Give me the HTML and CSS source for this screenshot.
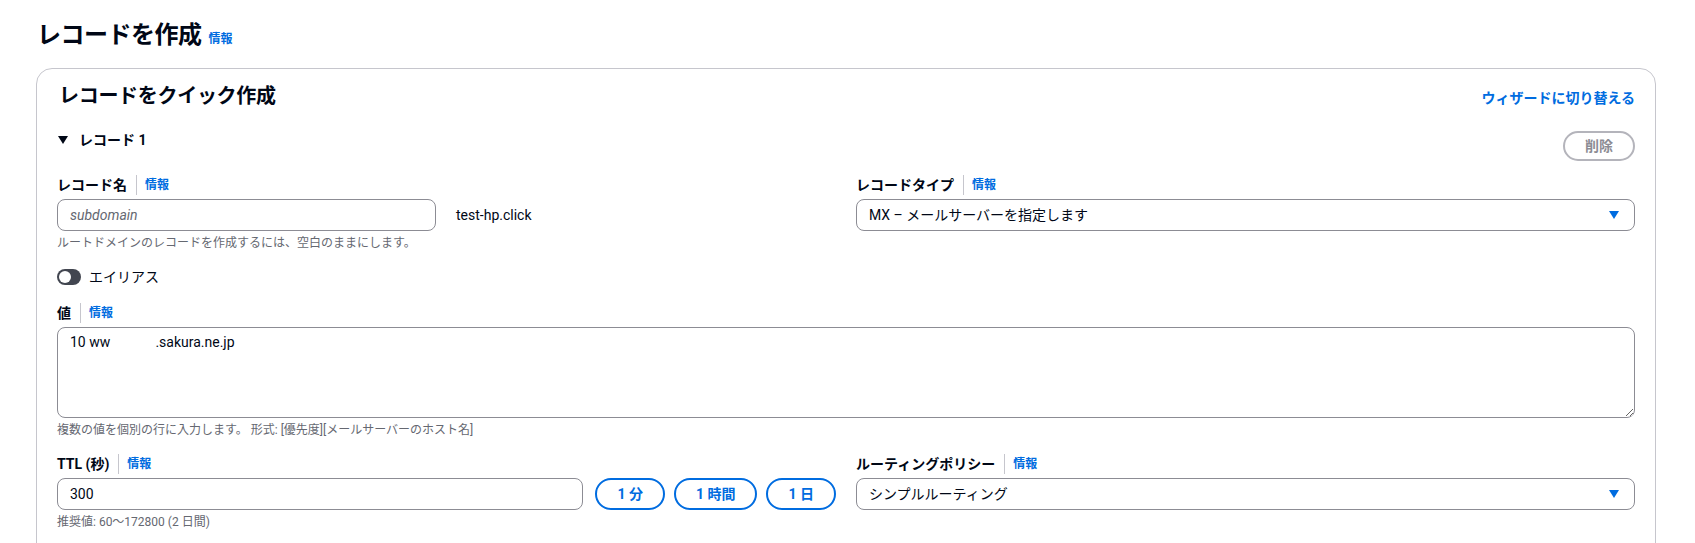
FILE: index.html
```html
<!DOCTYPE html>
<html lang="ja">
<head>
<meta charset="utf-8">
<title>レコードを作成</title>
<link rel="stylesheet" href="styles.css">
</head>
<body>
<div class="page">
  <div class="page-header">
    <h1 class="page-title">レコードを作成</h1>
    <a class="info-link title-info">情報</a>
  </div>

  <div class="container">
    <div class="container-header">
      <h2 class="container-title">レコードをクイック作成</h2>
      <a class="wizard-link">ウィザードに切り替える</a>
    </div>

    <div class="record-header">
      <div class="record-toggle">
        <svg class="caret" width="10" height="8" viewBox="0 0 10 8"><path d="M0 0 H10 L5 8 Z" fill="#000716"/></svg>
        <span>レコード 1</span>
      </div>
      <button class="btn-delete" disabled>削除</button>
    </div>

    <div class="grid2">
      <div class="field">
        <div class="label-row"><span class="label">レコード名</span><a class="info-link">情報</a></div>
        <div class="name-row">
          <input class="text-input name-input" type="text" placeholder="subdomain">
          <span class="domain-suffix">test-hp.click</span>
        </div>
        <div class="hint">ルートドメインのレコードを作成するには、空白のままにします。</div>
      </div>
      <div class="field">
        <div class="label-row"><span class="label">レコードタイプ</span><a class="info-link">情報</a></div>
        <div class="select">
          <span>MX – メールサーバーを指定します</span>
          <svg class="select-caret" width="12" height="10" viewBox="0 0 12 10"><path d="M1 1 H11 L6 9 Z" fill="#006ce0"/></svg>
        </div>
      </div>
    </div>

    <div class="alias-row">
      <span class="toggle"></span>
      <span class="alias-text">エイリアス</span>
    </div>

    <div class="field value-field">
      <div class="label-row"><span class="label">値</span><a class="info-link">情報</a></div>
      <textarea class="textarea">10 ww             .sakura.ne.jp</textarea>
      <div class="hint">複数の値を個別の行に入力します。 形式: [優先度][メールサーバーのホスト名]</div>
    </div>

    <div class="grid2 ttl-grid">
      <div class="field">
        <div class="label-row"><span class="label">TTL (秒)</span><a class="info-link">情報</a></div>
        <div class="ttl-row">
          <input class="text-input ttl-input" type="text" value="300">
          <div class="ttl-buttons">
            <button class="btn-pill">1 分</button>
            <button class="btn-pill">1 時間</button>
            <button class="btn-pill">1 日</button>
          </div>
        </div>
        <div class="hint">推奨値: 60〜172800 (2 日間)</div>
      </div>
      <div class="field">
        <div class="label-row"><span class="label">ルーティングポリシー</span><a class="info-link">情報</a></div>
        <div class="select">
          <span>シンプルルーティング</span>
          <svg class="select-caret" width="12" height="10" viewBox="0 0 12 10"><path d="M1 1 H11 L6 9 Z" fill="#006ce0"/></svg>
        </div>
      </div>
    </div>
  </div>
</div>
</body>
</html>
```

FILE: styles.css
```css
* { box-sizing: border-box; }

html, body {
  margin: 0;
  padding: 0;
  background: #ffffff;
}

body {
  font-family: Roboto, "Noto Sans CJK JP", sans-serif;
  color: #000716;
  font-size: 14px;
  line-height: 20px;
}

.page {
  padding: 20px 39px 0 36px;
}

.page-header {
  display: flex;
  align-items: baseline;
  gap: 7px;
  padding-left: 1px;
}

.page-title {
  margin: 0;
  font-size: 24px;
  line-height: 30px;
  font-weight: 700;
  letter-spacing: -0.5px;
}

.info-link {
  color: #006ce0;
  font-size: 12px;
  font-weight: 700;
  line-height: 16px;
  cursor: pointer;
}

.container {
  margin-top: 18px;
  border: 1px solid #c6c6cd;
  border-radius: 16px;
  background: #ffffff;
  padding: 16px 20px 40px 20px;
}

.container-header {
  display: flex;
  justify-content: space-between;
  align-items: baseline;
}

.container-title {
  margin: 0;
  font-size: 20px;
  line-height: 22px;
  font-weight: 700;
  letter-spacing: -0.3px;
  padding-left: 2px;
}

.wizard-link {
  color: #006ce0;
  font-weight: 700;
  font-size: 14px;
  line-height: 20px;
  cursor: pointer;
}

.record-header {
  display: flex;
  justify-content: space-between;
  align-items: flex-start;
  margin-top: 22px;
}

.record-toggle {
  display: flex;
  align-items: center;
  gap: 11px;
  font-weight: 700;
  font-size: 14px;
  line-height: 20px;
  padding-left: 1px;
}

.caret { display: block; }

.btn-delete {
  margin-top: 1px;
  width: 72px;
  height: 30px;
  border: 2px solid #b4b4bb;
  border-radius: 16px;
  background: #ffffff;
  color: #8c8c94;
  font-family: inherit;
  font-size: 14px;
  font-weight: 700;
  line-height: 20px;
  padding: 0;
}

.grid2 {
  display: grid;
  grid-template-columns: 1fr 1fr;
  column-gap: 20px;
  margin-top: 13px;
}

.field {
  display: flex;
  flex-direction: column;
}

.label-row {
  display: flex;
  align-items: center;
  height: 22px;
  margin-bottom: 3px;
}

.label {
  font-weight: 700;
  font-size: 14px;
  line-height: 20px;
  padding-right: 9px;
  border-right: 1px solid #c6c6cd;
}

.label-row .info-link {
  padding-left: 8px;
}

.text-input {
  height: 32px;
  border: 1px solid #8c8c94;
  border-radius: 8px;
  padding: 4px 12px;
  font-family: inherit;
  font-size: 14px;
  line-height: 22px;
  color: #000716;
  background: #ffffff;
  outline: none;
}

.text-input::placeholder {
  color: #656871;
  font-style: italic;
}

.name-row {
  display: flex;
  align-items: center;
  gap: 20px;
}

.name-input {
  width: 379px;
}

.domain-suffix {
  font-size: 14px;
  line-height: 20px;
}

.hint {
  margin-top: 4px;
  font-size: 12px;
  line-height: 16px;
  color: #656871;
}

.select {
  height: 32px;
  border: 1px solid #8c8c94;
  border-radius: 8px;
  padding: 4px 14px 4px 12px;
  display: flex;
  align-items: center;
  justify-content: space-between;
  font-size: 14px;
  line-height: 22px;
  background: #ffffff;
}

.select-caret { display: block; }

.alias-row {
  display: flex;
  align-items: center;
  gap: 8px;
  margin-top: 16px;
  height: 20px;
}

.toggle {
  position: relative;
  display: block;
  width: 24px;
  height: 16px;
  border-radius: 8px;
  background: #424650;
}

.toggle::after {
  content: "";
  position: absolute;
  left: 2px;
  top: 2px;
  width: 12px;
  height: 12px;
  border-radius: 50%;
  background: #ffffff;
}

.alias-text {
  font-size: 14px;
  line-height: 20px;
}

.value-field {
  margin-top: 15px;
}

.textarea {
  display: block;
  width: 100%;
  height: 91px;
  border: 1px solid #8c8c94;
  border-radius: 8px;
  padding: 4px 12px;
  font-family: inherit;
  font-size: 14px;
  line-height: 20px;
  color: #000716;
  resize: vertical;
  outline: none;
  background: #ffffff;
}

.ttl-grid {
  margin-top: 15px;
}

.ttl-row {
  display: flex;
  align-items: center;
  gap: 12px;
}

.ttl-input {
  flex: 1;
  min-width: 0;
}

.ttl-buttons {
  display: flex;
  gap: 9px;
}

.btn-pill {
  height: 32px;
  border: 2px solid #006ce0;
  border-radius: 20px;
  background: #ffffff;
  color: #006ce0;
  font-family: inherit;
  font-size: 14px;
  font-weight: 700;
  line-height: 20px;
  padding: 4px 20px;
  white-space: nowrap;
}
```
